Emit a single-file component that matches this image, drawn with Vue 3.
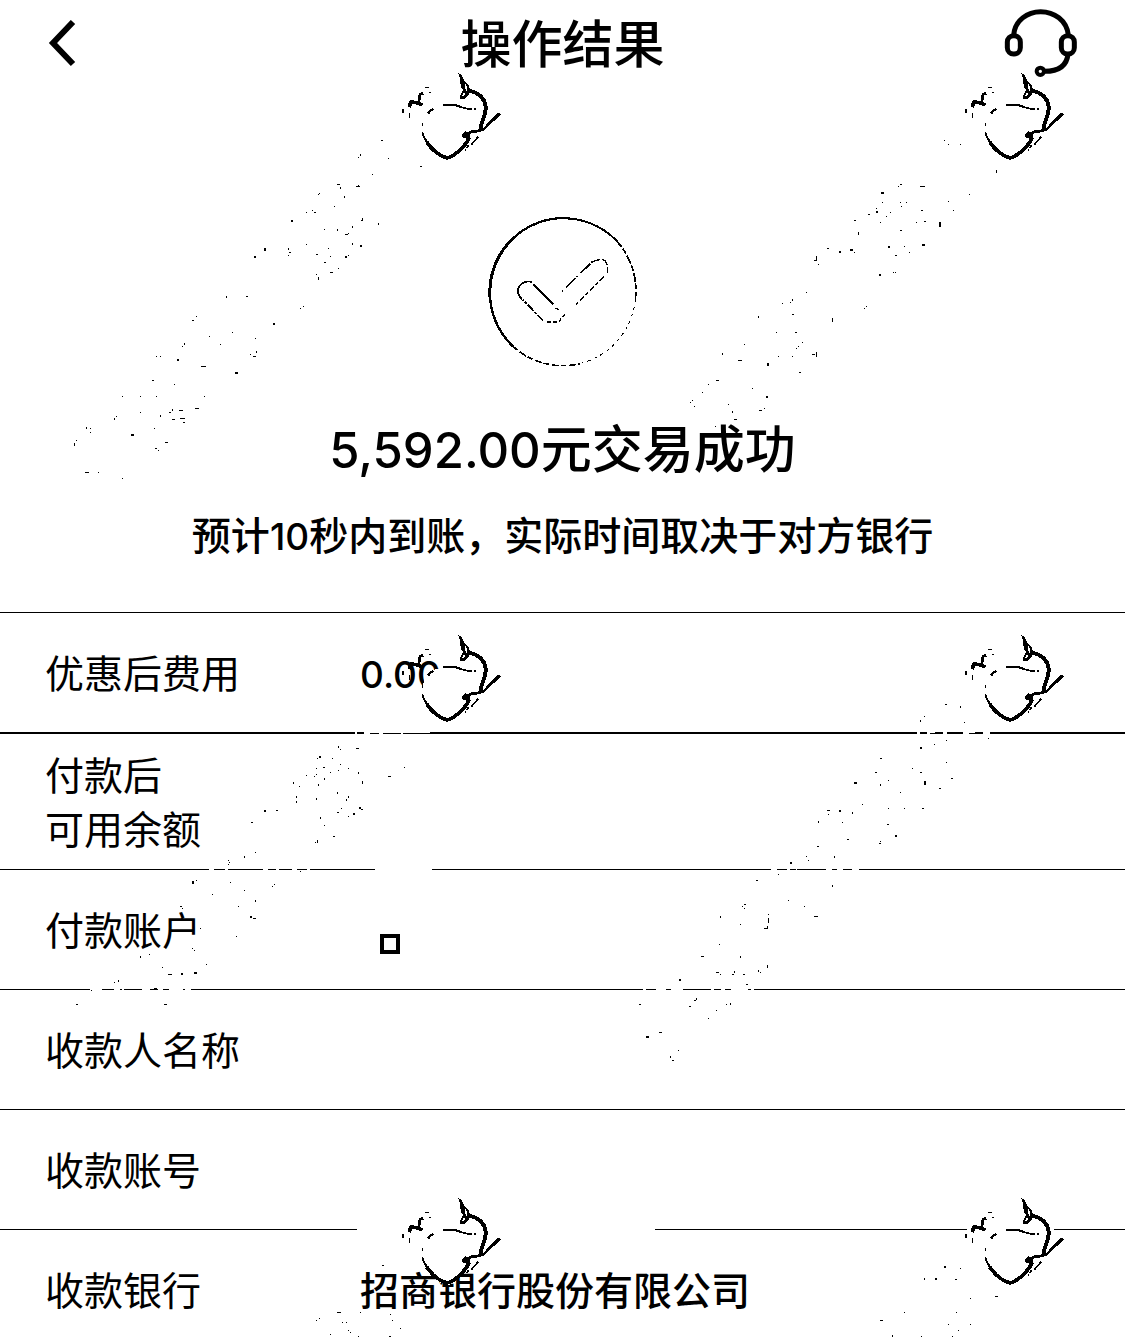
<script setup>
const rows = [
  { label: ['优惠后费用'], value: '0.00', kind: 'fee' },
  { label: ['付款后', '可用余额'], value: '', kind: 'balance' },
  { label: ['付款账户'], value: '', kind: 'account' },
  { label: ['收款人名称'], value: '' },
  { label: ['收款账号'], value: '' },
  { label: ['收款银行'], value: '招商银行股份有限公司', kind: 'bank' }
]

const stamps = [
  [390, 60], [953, 60],
  [390, 622], [953, 622],
  [390, 1185], [953, 1185]
]

// Watermark grain: each patch has an origin and marks "x,y[,width,height]"
// measured in thirds of a pixel from that origin.
const patches = [
  {
    x: 60, y: 130,
    marks: '965,31,6,3 901,72,3,6 895,82 985,85 1082,109,6,3 937,133 832,163,8,3 840,172,3,6 889,169,13,3 895,166 853,200,3,6 776,192 779,189 824,229 739,247 757,241 763,247,6,3 693,270,6,6 906,265,3,9 903,270 955,281,3,6 877,288,3,6 832,299,3,6 793,298 856,313,9,3 865,310 877,341,3,6 901,346,6,6 739,343 805,355 685,355,3,6 687,367,6,3 685,376 612,354,6,8 583,379,6,6 769,374,6,3 811,379 856,379,6,6 865,376 793,396,6,3 835,415 811,427,9,3 769,433 774,442,3,8 499,499,3,6 559,499,6,3 730,529 721,535 409,559 397,571,6,3 640,579,6,6 517,607 448,619 586,625 481,643 373,640,3,6 367,649 589,664,3,6 571,673 580,679,9,3 289,679 301,679 351,687,6,6 423,708,15,3 526,726,8,6 277,751,6,3 343,763 187,799 241,799 289,799 433,799 406,834,11,3 337,838,3,6 328,846,6,3 358,841,11,3 241,847 301,856,3,6 337,867,8,3 360,865,15,3 370,877,6,3 169,859 163,866,3,6 79,892,3,6 91,895 91,907 283,895 214,913,9,6 49,931 43,941,3,9 316,937,9,3 286,955,6,3 295,961 76,1027,11,3 115,1027 187,1045'
  },
  {
    x: 680, y: 130,
    marks: '793,31 805,43 841,43 948,121,3,9 661,163,6,3 655,169 721,169,15,3 604,187,8,6 868,193 607,217 661,217 679,217 664,229 805,214 820,241 589,235 589,244,6,6 631,247 619,259 724,241,6,3 565,253,6,3 523,270,6,3 601,277 709,277 733,274,6,3 778,277,6,14 535,307,3,9 661,300,6,3 443,354,6,3 477,363,6,6 511,358,8,6 523,367 626,350,6,6 673,349 727,344,9,6 688,367 646,376,6,3 409,379,4,16 404,390,6,3 415,403 640,427 646,427 598,433,6,6 379,487 337,509,3,6 331,516 307,520 337,553,6,3 559,528 553,535 235,559,3,6 457,565,3,11 289,607 346,607,6,3 367,637 355,649 349,655 193,643 127,670,3,6 397,673,8,3 409,667,3,14 295,679 337,679 175,691,11,3 262,700,6,8 358,727,6,3 109,751,8,3 85,763 217,775 67,787 259,799,6,6 37,811 31,817 43,829 145,823 253,835 238,842,8,3 157,845,3,6 163,868,9,3 106,889'
  },
  {
    x: 60, y: 720,
    marks: '835,80,3,6 840,87 889,84,8,3 778,110,6,6 772,115 817,115 841,133 769,145 790,142,6,3 835,151 865,145 811,157 895,157,3,6 739,166 769,163 763,169 793,175,3,6 775,193,3,6 700,187,3,6 718,199 907,185,3,9 833,217,3,6 865,230,3,6 859,239,3,6 709,229,3,6 709,244,3,6 769,236,3,6 985,170,8,3 1033,142 898,263,6,6 904,269,6,3 880,280,6,6 865,289 845,265 833,277,6,3 613,271,6,6 649,272,6,3 781,292,3,6 793,316 574,307,6,3 820,349,6,3 772,361,4,8 766,367 586,397 553,409,3,6 505,421 508,427 505,433 721,455 397,484,6,8 409,481 511,487 643,493 637,499 457,523 553,511 586,542,3,6 535,559 571,590,6,6 580,594,8,3 361,560,6,3 367,566 421,625 529,649 397,685 403,691 241,709,3,6 268,703 439,733 307,742 325,762,12,3 364,761,6,6 403,757,8,6 175,782,3,6 163,787 283,805,8,3 49,853,6,3 313,852,9,3 93,810'
  },
  {
    x: 620, y: 690,
    marks: '976,43,6,3 1021,49,3,6 913,79 901,92,3,6 1033,97 979,151 943,163 1105,145 901,172,6,6 781,205,6,3 979,217 877,235 766,247,6,3 901,247,6,3 913,274,6,11 995,264,6,3 703,278,9,5 805,271 781,284,3,6 958,295,6,3 841,307 727,343 805,355 853,355 907,355,6,3 622,362,8,3 625,372 658,361,6,6 697,367,3,6 595,394,3,6 667,397 802,403,6,3 826,436,6,6 682,448,6,3 781,454 778,460,6,3 592,468,6,3 559,499 643,499,3,6 565,511 512,516,7,6 475,553 409,571,6,3 637,586,3,6 505,631 553,649 583,679,11,3 373,643,6,3 367,649 373,655 301,679,3,6 361,703 445,673 445,685,3,14 433,714,12,4 443,709,4,10 298,763 245,799,8,3 361,799,3,6 442,827,3,9 415,842,3,6 421,847 289,847,8,3 301,853 343,844,3,6 337,852,6,3 370,853,6,3 178,869,6,6 379,883,6,3 229,925,3,6 223,932,6,3 208,949,6,3 58,944,6,3 319,943 331,940,3,6 289,961 265,985 118,1027,8,3 79,1038,8,5 175,1081 151,1100,3,6 157,1111,6,3'
  },
  {
    x: 300, y: 1180,
    marks: '246,257,6,3 112,396,11,4 181,397 58,415 49,421 127,427 139,427 271,403 277,421 145,451 151,457 301,445 91,463 175,469 267,469,6,3'
  },
  {
    x: 860, y: 1180,
    marks: '252,258,6,6 301,265 193,295,3,6 226,295,6,6 287,298,6,3 331,355 406,348,10,4 133,397 289,397 61,421,10,3 265,433 331,433 295,451 97,466,3,6 184,469 277,469'
  }
]

// Places where the row rules break up under the watermark: [y, height, [start, end]...]
const breaks = [
  [732, 2, [355, 357], [364, 370], [379, 383], [401, 403], [917, 920], [927, 930], [943, 947], [963, 969], [983, 990]],
  [732, 1, [370, 430], [930, 935], [969, 975]],
  [869, 1, [209, 214], [225, 228], [263, 268], [276, 279], [292, 297], [307, 310], [375, 432], [771, 777], [787, 790], [796, 797], [826, 832], [837, 843], [852, 859]],
  [989, 1, [90, 102], [114, 120], [122, 124], [142, 150], [158, 163], [169, 183], [185, 191], [643, 646], [656, 666], [671, 683], [711, 714], [721, 725], [731, 748], [751, 754]],
  [1229, 1, [357, 655], [967, 1054]]
]

const box = (x, y, w, h) => `M${x} ${y}h${w}v${h}h${-w}z`

const grain = patches
  .flatMap((p) =>
    p.marks.split(' ').map((mark) => {
      const [x, y, w = 3, h = 3] = mark.split(',').map(Number)
      return box(
        p.x + Math.floor(x / 3),
        p.y + Math.floor(y / 3),
        Math.max(1, Math.round(w / 3)),
        Math.max(1, Math.round(h / 3))
      )
    })
  )
  .join('')

const gaps = breaks
  .flatMap(([y, h, ...spans]) => spans.map(([a, b]) => box(a, y, b - a, h)))
  .join('')
</script>

<template>
  <main class="page">
    <header class="bar">
      <button class="icon-button" type="button" aria-label="返回">
        <svg width="30" height="48" viewBox="0 0 30 48">
          <path d="M26 2 L6 23 L26 44" fill="none" stroke="#000" stroke-width="6" />
        </svg>
      </button>
      <h1 class="title">操作结果</h1>
      <button class="icon-button" type="button" aria-label="客服">
        <svg width="74" height="70" viewBox="162 26 222 210">
          <g fill="none" stroke="#000" stroke-width="15">
            <path d="M191 104C195 60 232 34 272 34S350 60 355 104" />
            <rect x="172" y="106" width="39" height="55" rx="19" />
            <rect x="334" y="106" width="39" height="55" rx="19" />
            <path d="M354 162C350 196 326 213 284 213" />
            <circle cx="271" cy="213" r="11" stroke-width="12" />
          </g>
        </svg>
      </button>
    </header>

    <section class="result">
      <svg class="tick" width="150" height="150" viewBox="54 48 450 450" shape-rendering="crispEdges">
        <g fill="none" stroke="#000">
          <path d="M300 55A221 221 0 0 0 124 120" stroke-width="7" />
          <path d="M126 118A221 221 0 0 0 60 290" stroke-width="9" />
          <path d="M60 270A221 221 0 0 0 130 440" stroke-width="7" />
          <path d="M130 440A221 221 0 0 0 330 491" stroke-width="5" stroke-dasharray="17 8 22 5" />
          <path d="M290 55A221 221 0 0 1 455 140" stroke-width="6" />
          <path d="M458 146A221 221 0 0 1 496 300" stroke-width="5" stroke-dasharray="18 7 26 5" />
          <path d="M496 300A221 221 0 0 1 330 491" stroke-width="3" stroke-dasharray="6 15 10 12" />
          <path d="M185 247C170 240 143 250 144 275C145 285 150 292 156 297" stroke-width="5" />
          <path d="M190 253L250 312" stroke-width="6" />
          <path d="M257 324L272 331M285 343L265 366H228" stroke-width="4" stroke-dasharray="12 5" />
          <path d="M220 362L158 299" stroke-width="5" stroke-dasharray="24 5 9 4" />
          <path d="M275 275L367 185" stroke-width="5" stroke-dasharray="5 13 40 4" />
          <path d="M367 185C385 178 410 170 412 200V218" stroke-width="4" stroke-dasharray="25 5" />
          <path d="M402 230L318 314" stroke-width="5" stroke-dasharray="18 8 10 6" />
        </g>
      </svg>
      <p class="amount"><span class="figure">5,592.00</span>元交易成功</p>
      <p class="note">预计<span class="digits">10</span>秒内到账，实际时间取决于对方银行</p>
    </section>

    <dl class="details">
      <div v-for="row in rows" :key="row.label[0]" class="row" :class="row.kind">
        <dt class="label">
          <span v-for="line in row.label" :key="line" class="line">{{ line }}</span>
        </dt>
        <dd class="value">
          <span v-if="row.kind === 'account'" class="square"></span>
          <span v-else :class="{ digits: row.kind === 'fee' }">{{ row.value }}</span>
        </dd>
      </div>
    </dl>

    <svg class="watermark" viewBox="0 0 1125 1337" aria-hidden="true" shape-rendering="crispEdges">
      <defs>
        <symbol id="stamp" viewBox="0 0 390 330">
          <path d="M204 38L215 45L222 60L236 77L242 94L234 108L222 118L209 118L211 106L219 90L212 80L211 60Z" />
          <path d="M226 72L230 92M224 98L219 108" stroke="#fff" stroke-width="5" />
          <g fill="none" stroke="#000">
            <path d="M238 93C262 96 286 114 287 142C288 168 273 182 271 210" stroke-width="12" />
            <path d="M328 160L308 181" stroke-width="10" />
            <path d="M310 178L282 207L264 213L238 216" stroke-width="8" />
            <path d="M97 217L102 232L112 248" stroke-width="6" />
            <path d="M110 246C125 268 148 288 172 294C198 286 228 256 238 232" stroke-width="11" />
            <path d="M160 134H190L212 140" stroke-width="6" />
            <path d="M205 139L234 147H246M253 147H257" stroke-width="5" />
            <path d="M265 230L244 254M236 256L230 264M224 270H228" stroke-width="5" />
            <path d="M100 100L90 103L86 128" stroke-width="8" />
            <path d="M57 141L63 126L84 129L98 135" stroke-width="11" />
            <path d="M130 147L120 153L114 161" stroke-width="7" />
            <path d="M39 148V158M59 160V173M98 188V197M104 82H116M116 98H122" stroke-width="4" />
          </g>
          <path d="M216 222L226 214L242 217L240 234L228 236L217 232Z" />
        </symbol>
      </defs>
      <path :d="gaps" fill="#fff" />
      <path d="M424 672L446 667V694H423ZM439 1270H463L450 1285L440 1283Z" fill="#fff" />
      <path :d="grain" />
      <use v-for="[x, y] in stamps" :key="`${x}-${y}`" href="#stamp" :x="x" :y="y" width="130" height="110" />
    </svg>
  </main>
</template>

<style>
body {
  margin: 0;
  background: #fff;
}
</style>

<style scoped>
.page {
  position: relative;
  overflow: hidden;
  background: #fff;
  color: #000;
  font-family: "Noto Sans CJK SC", sans-serif;
}

.bar {
  display: flex;
  align-items: center;
  justify-content: space-between;
  height: 88px;
  padding: 0 47px;
}

.icon-button {
  display: flex;
  flex: 0 0 74px;
  padding: 0;
  border: 0;
  background: none;
}

.title {
  margin: 0;
  padding-bottom: 6px;
  font-size: 51px;
  font-weight: 500;
  line-height: 60px;
}

.result {
  display: flex;
  flex-direction: column;
  align-items: center;
  padding: 128px 24px 52px;
}

.amount {
  margin: 50px 0 30px;
  font-size: 51px;
  font-weight: 500;
  line-height: 60px;
}

.figure {
  font-family: Inter, sans-serif;
  font-size: 49px;
  line-height: 1;
}

.note {
  margin: 0;
  font-size: 39px;
  font-weight: 500;
  line-height: 54px;
}

.digits {
  font-family: Inter, sans-serif;
  font-size: 37px;
  font-weight: 500;
  line-height: 1;
}

.details {
  margin: 0;
  font-size: 39px;
  line-height: 54px;
}

.row {
  display: flex;
  min-height: 54px;
  padding: 31px 45px 34px;
  border-top: 1px solid #000;
}

.balance {
  padding: 12px 45px 15px;
  border-top-width: 2px;
}

.bank {
  padding-bottom: 22px;
}

.label {
  flex: 0 0 315px;
}

.line {
  display: block;
}

.value {
  flex: 1;
  margin: 0;
}

.bank .value {
  font-weight: 500;
}

.square {
  display: block;
  box-sizing: border-box;
  width: 20px;
  height: 20px;
  margin: 33px 0 0 20px;
  border: 4px solid #000;
}

.watermark {
  position: absolute;
  top: 0;
  left: 0;
  width: 100%;
  pointer-events: none;
}
</style>
